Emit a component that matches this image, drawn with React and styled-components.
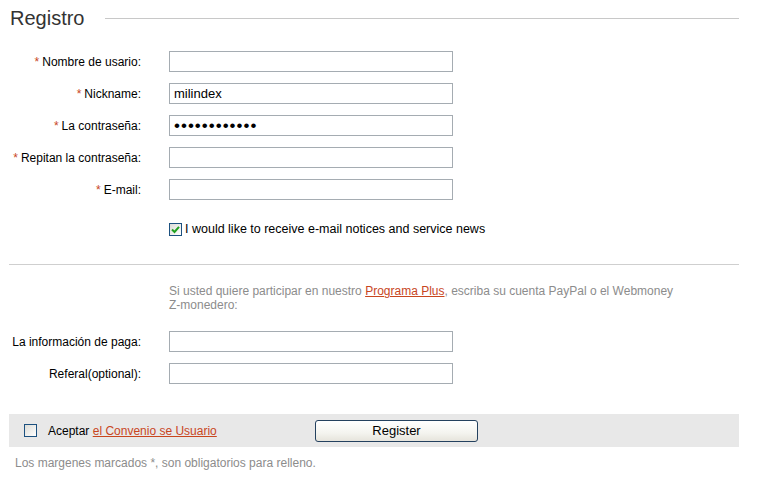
import styled, { createGlobalStyle } from "styled-components"

const GlobalStyle = createGlobalStyle`
    body {
        margin: 0;
        background: #ffffff;
        font-family: "Liberation Sans", Arial, sans-serif;
        font-size: 12px;
        color: #000;
    }
`

const Page = styled.div`
    width: 730px;
    padding: 0 0 0 9px;
`

const Header = styled.div`
    display: flex;
    align-items: center;
    gap: 21px;
    height: 36px;
    padding-left: 1px;
`

const Title = styled.h1`
    margin: 0;
    font-size: 20px;
    font-weight: normal;
    color: #333;
`

const HeaderLine = styled.div`
    flex: 1;
    height: 1px;
    background: #c8c8c8;
    margin-top: 1px;
`

const Form = styled.div`
    display: grid;
    grid-template-columns: 132px 284px;
    column-gap: 28px;
    row-gap: 11px;
    align-items: center;
    margin-top: ${props => props.top || 0}px;
`

const Label = styled.label`
    text-align: right;
    color: #000;
    white-space: nowrap;
    line-height: 14px;
`

const Star = styled.span`
    color: #c8461e;
    margin-right: 3px;
`

const Input = styled.input`
    box-sizing: border-box;
    width: 284px;
    height: 21px;
    border: 1px solid #a5acb2;
    padding: 0 4px;
    font-family: "Liberation Sans", Arial, sans-serif;
    font-size: 13px;
    color: #000;
    outline: none;
    &[type="password"] {
        font-size: 17px;
        letter-spacing: 1px;
    }
`

const NewsRow = styled.div`
    display: flex;
    align-items: center;
    gap: 3px;
    margin: 22px 0 0 160px;
    font-size: 12.5px;
`

const Box = styled.span`
    box-sizing: border-box;
    width: 13px;
    height: 13px;
    border: 1px solid #1c5180;
    background: linear-gradient(135deg, #dcdcd7 0%, #ffffff 100%);
    display: inline-flex;
    align-items: center;
    justify-content: center;
`

const Divider = styled.div`
    height: 1px;
    background: #cfcfcf;
    margin-top: 28px;
`

const Note = styled.p`
    margin: 19px 0 0 160px;
    width: 545px;
    color: #8c8c8c;
    line-height: 14px;
`

const NoWrap = styled.span`
    white-space: nowrap;
`

const Link = styled.a`
    color: #c8461e;
    text-decoration: underline;
`

const Bar = styled.div`
    display: flex;
    align-items: center;
    height: 33px;
    margin-top: 30px;
    background: #e8e8e8;
    padding-left: 15px;
`

const Accept = styled.div`
    display: flex;
    align-items: center;
    gap: 11px;
    width: 291px;
`

const Button = styled.button`
    width: 163px;
    height: 22px;
    border: 1px solid #24415f;
    border-radius: 3px;
    background: linear-gradient(#ffffff 0%, #f4f4ef 60%, #e6e4dc 100%);
    font-family: "Liberation Sans", Arial, sans-serif;
    font-size: 13px;
    color: #000;
    padding: 0;
`

const Footer = styled.p`
    margin: 9px 0 0 6px;
    color: #8c8c8c;
`

const Check = () => (
    <svg width="9" height="9" viewBox="0 0 9 9">
        <path d="M1 4.5 L3.5 7 L8 1.8" fill="none" stroke="#21a121" strokeWidth="2" />
    </svg>
)

const fields = [
    { label: "Nombre de usario:", value: "" },
    { label: "Nickname:", value: "milindex" },
    { label: "La contraseña:", value: "passwordxxx1", type: "password" },
    { label: "Repitan la contraseña:", value: "" },
    { label: "E-mail:", value: "" },
]

const App = () => {
    return (
        <Page>
            <GlobalStyle />
            <Header>
                <Title>Registro</Title>
                <HeaderLine />
            </Header>
            <Form top={15}>
                {fields.map(f => (
                    <>
                        <Label key={f.label}><Star>*</Star>{f.label}</Label>
                        <Input type={f.type || "text"} defaultValue={f.value} />
                    </>
                ))}
            </Form>
            <NewsRow>
                <Box><Check /></Box>
                <span>I would like to receive e-mail notices and service news</span>
            </NewsRow>
            <Divider />
            <Note>
                Si usted quiere participar en nuestro <Link href="#">Programa Plus</Link>, escriba su cuenta PayPal o el Webmoney <NoWrap>Z-monedero:</NoWrap>
            </Note>
            <Form top={19}>
                <Label>La información de paga:</Label>
                <Input />
                <Label>Referal(optional):</Label>
                <Input />
            </Form>
            <Bar>
                <Accept>
                    <Box />
                    <span>Aceptar <Link href="#">el Convenio se Usuario</Link></span>
                </Accept>
                <Button>Register</Button>
            </Bar>
            <Footer>Los margenes marcados *, son obligatorios para relleno.</Footer>
        </Page>
    )
}

export default App
